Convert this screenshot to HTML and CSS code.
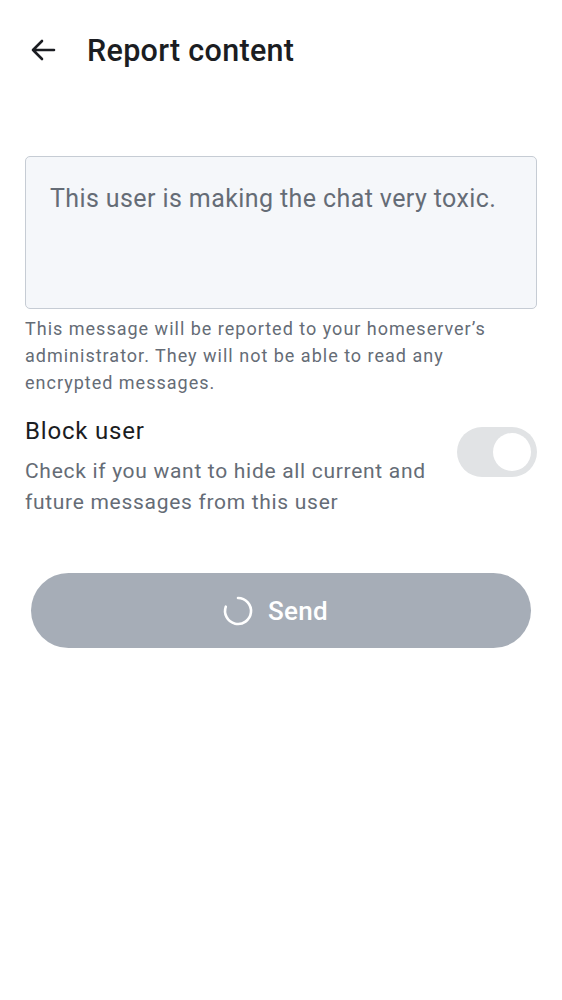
FILE: index.html
```html
<!DOCTYPE html>
<html>
<head>
<meta charset="utf-8">
<link rel="stylesheet" href="styles.css">
</head>
<body>
<div class="page">
  <header class="topbar">
    <svg class="back" width="26" height="24" viewBox="0 0 26 24"><path d="M24 12H3M12 3L3 12L12 21" fill="none" stroke="#1b1d22" stroke-width="2.6" stroke-linecap="round" stroke-linejoin="round"/></svg>
    <h1 class="title">Report content</h1>
  </header>
  <main class="content">
    <div class="field">This user is making the chat very toxic.</div>
    <p class="helper">This message will be reported to your homeserver’s administrator. They will not be able to read any encrypted messages.</p>
    <div class="block-row">
      <div class="block-text">
        <div class="block-title">Block user</div>
        <div class="block-desc">Check if you want to hide all current and future messages from this user</div>
      </div>
      <div class="switch"><div class="knob"></div></div>
    </div>
    <div class="btn">
      <svg class="spinner" width="32" height="32" viewBox="0 0 32 32"><path d="M16 3 A13 13 0 1 1 3.8 11.6" fill="none" stroke="#fff" stroke-width="2.6" stroke-linecap="round"/></svg>
      <span class="btn-label">Send</span>
    </div>
  </main>
</div>
</body>
</html>
```
FILE: styles.css
```css
html, body {
  margin: 0;
  padding: 0;
  background: #ffffff;
  font-family: Roboto, "Noto Sans", sans-serif;
}
.page {
  width: 562px;
}
.topbar {
  display: flex;
  align-items: center;
  height: 100px;
  padding-left: 30px;
}
.back {
  display: block;
  margin-right: 31px;
}
.title {
  margin: 0;
  font-size: 30.5px;
  font-weight: 500;
  letter-spacing: 0.3px;
  color: #1b1d22;
}
.content {
  padding: 56px 25px 0 25px;
}
.field {
  box-sizing: border-box;
  height: 153px;
  border: 1px solid #c6ccd4;
  border-radius: 5px;
  background: #f5f7fa;
  padding: 27px 24px 25px 24px;
  font-size: 25px;
  letter-spacing: 0.4px;
  color: #656c76;
}
.helper {
  margin: 6px 0 0 0;
  font-size: 18px;
  line-height: 27px;
  letter-spacing: 1px;
  color: #656c76;
}
.block-row {
  display: flex;
  align-items: flex-start;
  justify-content: space-between;
  margin-top: 19px;
}
.block-title {
  font-size: 24px;
  line-height: 33px;
  letter-spacing: 0.8px;
  color: #1b1d22;
}
.block-desc {
  margin-top: 8px;
  font-size: 21px;
  line-height: 31px;
  letter-spacing: 0.7px;
  color: #656c76;
  width: 415px;
}
.switch {
  box-sizing: border-box;
  width: 80px;
  height: 50px;
  border-radius: 25px;
  background: #e1e3e5;
  margin-top: 12px;
  display: flex;
  align-items: center;
  justify-content: flex-end;
  padding-right: 6px;
}
.knob {
  width: 38px;
  height: 38px;
  border-radius: 50%;
  background: #ffffff;
}
.btn {
  margin: 55px 6px 0 6px;
  height: 75px;
  border-radius: 38px;
  background: #a6adb7;
  display: flex;
  align-items: center;
  justify-content: center;
  gap: 14px;
  padding-right: 12px;
}
.spinner {
  display: block;
}
.btn-label {
  font-size: 26px;
  font-weight: 500;
  letter-spacing: 0.3px;
  color: #ffffff;
}
```
